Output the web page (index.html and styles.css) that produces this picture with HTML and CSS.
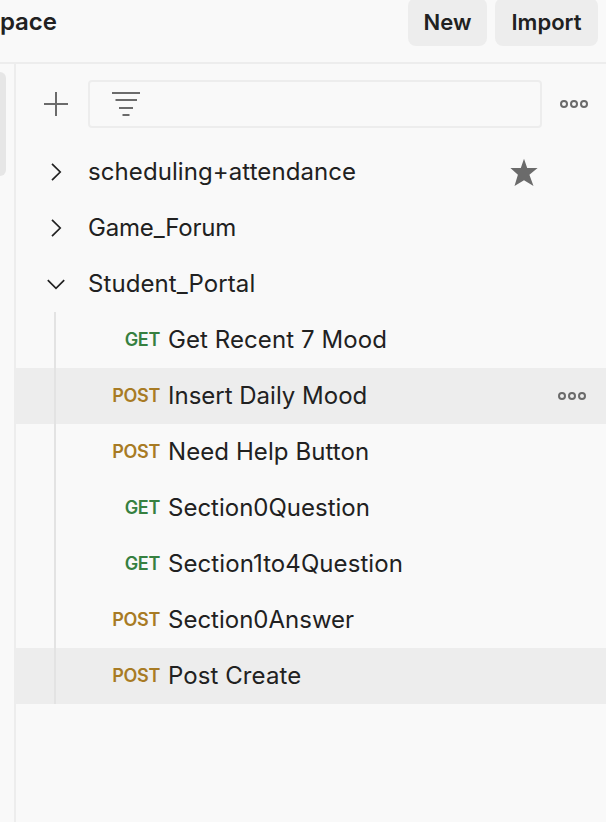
FILE: index.html
```html
<!DOCTYPE html>
<html lang="en">
<head>
<meta charset="utf-8">
<title>Workspace</title>
<link rel="stylesheet" href="styles.css">
</head>
<body>
<header class="topbar">
  <h1 class="title">pace</h1>
  <button class="btn btn-new">New</button>
  <button class="btn btn-import">Import</button>
</header>
<div class="main">
  <nav class="rail"><div class="rail-active"></div></nav>
  <section class="sidebar">
    <div class="toolbar">
      <svg class="plus" width="26" height="26" viewBox="0 0 26 26"><path d="M13 1v24M1 13h24"/></svg>
      <div class="filter">
        <svg width="30" height="26" viewBox="0 0 30 26"><path d="M1 2h28M4.500 9h21.500M8 17h14M11.500 24h7"/></svg>
      </div>
      <svg class="dots" width="30" height="12" viewBox="0 0 30 12"><circle cx="5" cy="6" r="3"/><circle cx="15" cy="6" r="3"/><circle cx="25" cy="6" r="3"/></svg>
    </div>
    <div class="row"><svg class="chev" width="20" height="20" viewBox="0 0 20 20"><path d="M6 1.800l8.200 8.200-8.200 8.200"/></svg><span class="name loose">scheduling+attendance</span><svg class="star" width="28" height="28" viewBox="0 0 28 28"><path d="M14 .8l3.200 9.300h10.400l-8.200 6.600 4.100 11.300-9.500-5.700-9.500 5.700 3.400-11.300-7.500-6.600h10.400z"/></svg></div>
    <div class="row"><svg class="chev" width="20" height="20" viewBox="0 0 20 20"><path d="M6 1.800l8.200 8.200-8.200 8.200"/></svg><span class="name tight">Game_Forum</span></div>
    <div class="row"><svg class="chev" width="20" height="20" viewBox="0 0 20 20"><path d="M1.800 6.200l8.200 8.200 8.200-8.200"/></svg><span class="name loose">Student_Portal</span></div>
    <div class="requests">
      <div class="req"><span class="method get">GET</span><span class="name loose">Get Recent 7 Mood</span></div>
      <div class="req active"><span class="method post">POST</span><span class="name">Insert Daily Mood</span><svg class="dots" width="30" height="12" viewBox="0 0 30 12"><circle cx="5" cy="6" r="3"/><circle cx="15" cy="6" r="3"/><circle cx="25" cy="6" r="3"/></svg></div>
      <div class="req"><span class="method post">POST</span><span class="name loose">Need Help Button</span></div>
      <div class="req"><span class="method get">GET</span><span class="name">Section0Question</span></div>
      <div class="req"><span class="method get">GET</span><span class="name loose">Section1to4Question</span></div>
      <div class="req"><span class="method post">POST</span><span class="name">Section0Answer</span></div>
      <div class="req active"><span class="method post">POST</span><span class="name loose">Post Create</span></div>
    </div>
  </section>
</div>
</body>
</html>
```

FILE: styles.css
```css
* { box-sizing: border-box; }
body { margin: 0; height: 822px; overflow: hidden; background: #f9f9f9; color: #212121; font-family: Inter, sans-serif; font-size: 24px; }
svg { display: block; fill: none; stroke: #6b6b6b; stroke-width: 2; flex: none; }
.topbar { display: flex; height: 64px; border-bottom: 2px solid #ededed; padding-right: 8px; }
.title { margin: 0 auto 0 0; font-size: 24px; font-weight: 600; line-height: 44px; letter-spacing: -0.1px; }
.btn { height: 48px; margin-top: -2px; border: 0; padding: 0 0 1px; border-radius: 8px; background: #ededed; color: #212121; font: 600 22px/44px Inter, sans-serif; }
.btn-new { width: 79px; margin-right: 8px; }
.btn-import { width: 103px; }
.main { display: flex; height: 758px; }
.rail { width: 16px; border-right: 2px solid #ededed; padding-top: 8px; }
.rail-active { width: 6px; height: 104px; border-radius: 0 8px 8px 0; background: #e6e6e6; }
.sidebar { flex: 1; }
.toolbar { display: flex; align-items: center; height: 80px; padding: 0 17px 0 27px; }
.filter { display: flex; align-items: center; width: 454px; height: 48px; margin-left: 19px; padding-left: 21px; border: 2px solid #ededed; border-radius: 4px; }
.dots { margin-left: auto; }
.row { display: flex; align-items: center; height: 56px; padding: 0 68px 0 30px; }
.chev { margin-right: 22px; stroke: #212121; stroke-width: 1.7; }
.star { margin-left: auto; fill: #6b6b6b; stroke: none; }
.name { padding-bottom: 2px; }
.loose { letter-spacing: 0.08px; }
.tight { letter-spacing: -0.18px; }
.requests { position: relative; }
.requests::before { content: ""; position: absolute; left: 38px; top: 0; bottom: 0; width: 2px; background: #e3e3e3; }
.req { display: flex; align-items: center; height: 56px; padding-right: 19px; }
.active { background: #ededed; }
.method { width: 144px; margin-right: 8px; padding-bottom: 1px; text-align: right; font-size: 18px; font-weight: 600; letter-spacing: -0.3px; }
.get { color: #368040; }
.post { color: #a87b24; }
```
